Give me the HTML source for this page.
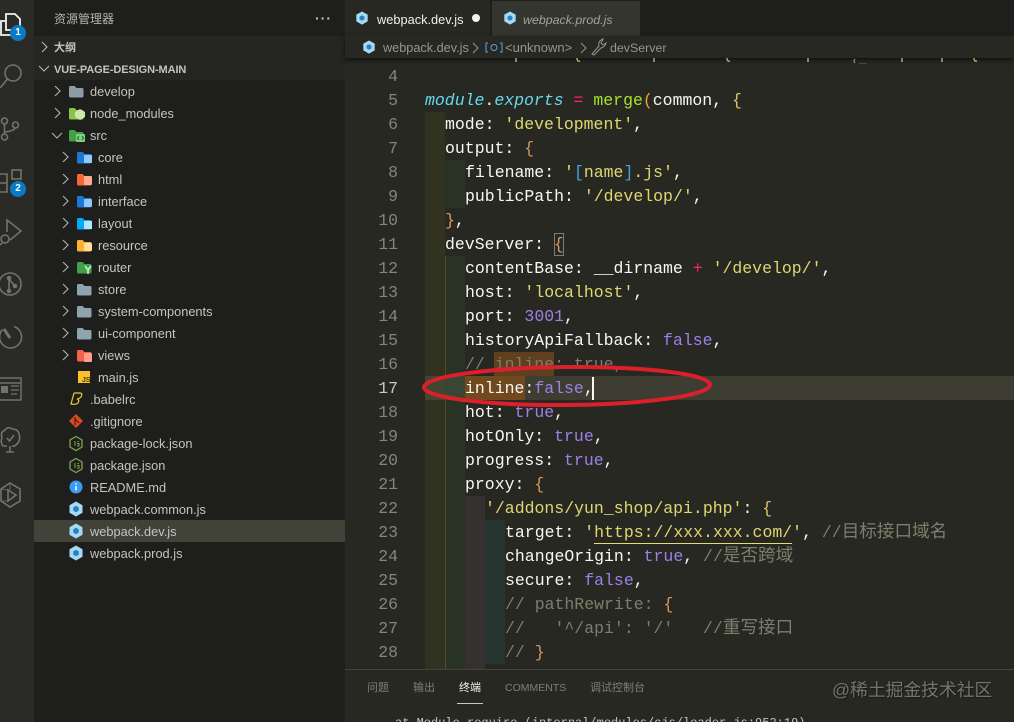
<!DOCTYPE html>
<html><head><meta charset="utf-8"><style>
html,body{margin:0;padding:0;background:#272822}
#r{position:relative;width:1014px;height:722px;overflow:hidden;background:#272822;font-family:"Liberation Sans","Noto Sans CJK SC",sans-serif}
#r div{position:absolute}
.t{left:0;font-size:12.8px;line-height:24px;height:22px;color:#c4c4bf;white-space:nowrap}
.c{font-family:"Liberation Mono","Noto Sans CJK SC",monospace;font-size:16.5px;line-height:26px;height:24px;color:#f8f8f2;white-space:pre}
.n{font-family:"Liberation Mono",monospace;font-size:16.5px;line-height:26px;height:24px;width:60px;left:338px;text-align:right;color:#85857f}
.s{color:#e0d672}.k{color:#9d80e8}.cm{color:#7f7d6c}.o{color:#d79a5e}.y{color:#e0c46a}.b{color:#3ea6d6}
.z{font-size:17.6px;line-height:1}
svg{position:absolute;overflow:visible}
.p{font-size:11px;color:#7f7f79;line-height:16px;white-space:nowrap;top:680px}
</style></head><body><div id="r">
<svg width="0" height="0" style="position:absolute"><defs>
<g id="wp"><path d="M8 0.500 14.500 4.200V11.800L8 15.500 1.500 11.800V4.200Z" fill="#a6daf4"/><path d="M8 4.800 10.800 6.400V9.600L8 11.200 5.200 9.600V6.400Z" fill="#2a80c0"/></g>
<path id="f" d="M0 2.500Q0 1 1.500 1H5.500L7.500 3H13Q14.500 3 14.500 4.500V11Q14.500 12.500 13 12.500H1.500Q0 12.500 0 11Z"/>
<g id="nj"><path d="M7 .5 13 4V11L7 14.500 1 11V4Z" fill="none" stroke="#7da74f" stroke-width="1.300"/><path d="M6 5V10M8.500 5.500H10M8 7.500H10V10H8" fill="none" stroke="#7da74f"/></g>
<path id="ch" d="M0 0 5 5 0 10" fill="none" stroke="#b5b5b0" stroke-width="1.100"/>
<path id="cd" d="M0 0 5 5 10 0" fill="none" stroke="#b5b5b0" stroke-width="1.100"/>
</defs></svg>

<!-- activity bar -->
<div style="left:0;top:0;width:34px;height:722px;background:#2a2b26"></div>
<svg style="left:0;top:0" width="34" height="722" fill="none" stroke="#73736c" stroke-width="1.600">
<path d="M6 21H1V35H13" stroke="#f2f2f0" stroke-width="1.800"/><path d="M6 14H15L20 19V30H6Z" stroke="#f2f2f0" stroke-width="1.800" fill="#2a2b26"/>
<circle cx="13" cy="73" r="8"/><path d="M7.500 79 0 88"/>
<circle cx="4.500" cy="121" r="3"/><circle cx="4.500" cy="137" r="3"/><circle cx="15.500" cy="125" r="3"/><path d="M4.500 124V134M4.500 132Q14 131 15 128"/>
<rect x="12" y="170" width="9" height="9"/><path d="M0 174H7V192H0M0 183H7"/>
<path d="M7 232V220L21 231 10 240"/><circle cx="5" cy="239" r="4"/><path d="M0 245 2 243"/>
<circle cx="10" cy="284" r="11"/><circle cx="9" cy="278" r="1.500" fill="#73736c"/><circle cx="9" cy="291" r="1.500" fill="#73736c"/><circle cx="15" cy="286" r="1.500" fill="#73736c"/><path d="M9 278V291M9 279 15 286"/>
<path d="M14 326.500A11 11 0 1 1 2.500 329.500"/><path d="M4 329 10 338" stroke-width="3"/>
<path d="M0 378H21V400H0M0 383H21" stroke-width="1.400"/><rect x="1" y="386" width="7" height="7" fill="#73736c" stroke="none"/><path d="M11 386H19M11 390H19M11 394H17" stroke-width="1.200"/>
<path d="M7 446H3Q0 442 2 438Q0 432 5 430Q8 426 12 429Q18 429 19 434Q21 440 17 444Q14 447 12 446M10 446V452M6 452H14M7 438 9.500 441 14 435"/>
<path d="M10 483 20 489V501L10 507 1 501V489Z"/><path d="M8 490 16 495 8 501Z"/><path d="M1 489 8 490M1 501 8 501M10 483V490" stroke-width=".8"/>
</svg>
<div style="left:10px;top:25px;width:16px;height:16px;border-radius:8px;background:#0a7ac6;color:#fff;font-size:10px;font-weight:bold;line-height:16px;text-align:center">1</div>
<div style="left:10px;top:181px;width:16px;height:16px;border-radius:8px;background:#0a7ac6;color:#fff;font-size:10px;font-weight:bold;line-height:16px;text-align:center">2</div>

<!-- sidebar -->
<div style="left:34px;top:0;width:311px;height:722px;background:#1e1e1c"></div>
<div style="left:34px;top:36px;width:311px;height:44px;background:#252622"></div>
<div style="left:34px;top:520px;width:311px;height:22px;background:#414339"></div>
<div style="left:54px;top:10px;font-size:12px;line-height:18px;color:#b4b4ae">资源管理器</div>
<div style="left:315px;top:11px;font-size:14px;line-height:14px;color:#c8c8c2;letter-spacing:1px;font-weight:bold">···</div>
<div style="left:54px;top:39px;font-size:11px;line-height:18px;color:#c4c4be;font-weight:bold">大纲</div>
<div style="left:54px;top:61px;font-size:11px;line-height:18px;color:#c4c4be;font-weight:bold;letter-spacing:-.1px">VUE-PAGE-DESIGN-MAIN</div>
<svg style="left:42px;top:42px" width="6" height="11"><use href="#ch"/></svg>
<svg style="left:39px;top:66px" width="11" height="6"><use href="#cd"/></svg>

<div class="t" style="top:80px;left:90px">develop</div>
<div class="t" style="top:102px;left:90px">node_modules</div>
<div class="t" style="top:124px;left:90px">src</div>
<div class="t" style="top:146px;left:98px">core</div>
<div class="t" style="top:168px;left:98px">html</div>
<div class="t" style="top:190px;left:98px">interface</div>
<div class="t" style="top:212px;left:98px">layout</div>
<div class="t" style="top:234px;left:98px">resource</div>
<div class="t" style="top:256px;left:98px">router</div>
<div class="t" style="top:278px;left:98px">store</div>
<div class="t" style="top:300px;left:98px">system-components</div>
<div class="t" style="top:322px;left:98px">ui-component</div>
<div class="t" style="top:344px;left:98px">views</div>
<div class="t" style="top:366px;left:98px">main.js</div>
<div class="t" style="top:388px;left:90px">.babelrc</div>
<div class="t" style="top:410px;left:90px">.gitignore</div>
<div class="t" style="top:432px;left:90px">package-lock.json</div>
<div class="t" style="top:454px;left:90px">package.json</div>
<div class="t" style="top:476px;left:90px">README.md</div>
<div class="t" style="top:498px;left:90px">webpack.common.js</div>
<div class="t" style="top:520px;left:90px">webpack.dev.js</div>
<div class="t" style="top:542px;left:90px">webpack.prod.js</div>

<svg style="left:0;top:0" width="345" height="722">
<use href="#ch" x="55" y="86"/><use href="#ch" x="55" y="108"/><use href="#cd" x="52" y="133"/>
<use href="#ch" x="63" y="152"/><use href="#ch" x="63" y="174"/><use href="#ch" x="63" y="196"/><use href="#ch" x="63" y="218"/><use href="#ch" x="63" y="240"/><use href="#ch" x="63" y="262"/><use href="#ch" x="63" y="284"/><use href="#ch" x="63" y="306"/><use href="#ch" x="63" y="328"/><use href="#ch" x="63" y="350"/>
<use href="#f" x="69" y="85" fill="#8f9ca3"/>
<use href="#f" x="69" y="107" fill="#8bc34a"/><path d="M80 109 85 112V117L80 120 75 117V112Z" fill="#cfe8a9"/>
<use href="#f" x="69" y="129" fill="#43a047"/><rect x="76" y="134" width="9" height="8" rx="1" fill="#7ed07f"/><path d="M79 136 77.500 138 79 140M82 136 83.500 138 82 140" stroke="#1b5e20" fill="none"/>
<use href="#f" x="77" y="151" fill="#1e78d8"/><rect x="84" y="155" width="8" height="8" fill="#90caf9"/>
<use href="#f" x="77" y="173" fill="#f4683a"/><rect x="84" y="176" width="8" height="9" rx="1" fill="#ffab91"/>
<use href="#f" x="77" y="195" fill="#1e78d8"/><rect x="84" y="199" width="8" height="8" rx="1" fill="#90caf9"/>
<use href="#f" x="77" y="217" fill="#03a9f4"/><rect x="84" y="221" width="8" height="8" fill="#b3e5fc"/>
<use href="#f" x="77" y="239" fill="#f9b233"/><rect x="84" y="243" width="8" height="8" rx="1" fill="#ffe29a"/>
<use href="#f" x="77" y="261" fill="#43a047"/><path d="M85 266 88 270 91 266M88 270V274" stroke="#b9f6ca" stroke-width="1.600" fill="none"/>
<use href="#f" x="77" y="283" fill="#90a4ae"/><use href="#f" x="77" y="305" fill="#90a4ae"/><use href="#f" x="77" y="327" fill="#90a4ae"/>
<use href="#f" x="77" y="349" fill="#f4624a"/><rect x="84" y="353" width="8" height="9" rx="1" fill="#ff9e89"/>
<rect x="78" y="371" width="12" height="12" fill="#fbc02d"/><text x="82" y="382" font-size="7" font-weight="bold" fill="#4d3b00" font-family="Liberation Sans">JS</text>
<path d="M74 393H80Q83 393 81 397 79 399 77 399 80 400 78 403 76 405 71 404L74 393" fill="none" stroke="#e7d028" stroke-width="1.200"/>
<path d="M76 414 83 421 76 428 69 421Z" fill="#d8481f"/><path d="M75 417V425M75 419 79 423" stroke="#1e1f1c" fill="none"/>
<use href="#nj" x="69" y="436"/><use href="#nj" x="69" y="458"/>
<circle cx="76" cy="487" r="6.500" fill="#3a9bf0"/><rect x="75.200" y="486" width="1.600" height="4.500" fill="#e8f3ff"/><rect x="75.200" y="483" width="1.600" height="1.600" fill="#e8f3ff"/>
<use href="#wp" x="68" y="501"/><use href="#wp" x="68" y="523"/><use href="#wp" x="68" y="545"/>
</svg>

<!-- tabs -->
<div style="left:345px;top:0;width:669px;height:36px;background:#1e1f1c"></div>
<div style="left:345px;top:0;width:145px;height:36px;background:#272822"></div>
<div style="left:492px;top:1px;width:148px;height:35px;background:#34352f"></div>
<svg style="left:355px;top:11px" width="14" height="14" viewBox="0 0 16 16"><use href="#wp"/></svg>
<svg style="left:503px;top:11px" width="14" height="14" viewBox="0 0 16 16"><use href="#wp"/></svg>
<div style="left:377px;top:11px;font-size:12.8px;line-height:18px;color:#f0f0ea;white-space:nowrap">webpack.dev.js</div>
<div style="left:472px;top:14px;width:8px;height:8px;border-radius:4px;background:#f4f4f0"></div>
<div style="left:523px;top:11px;font-size:12.4px;line-height:18px;color:#a2a29c;font-style:italic;white-space:nowrap">webpack.prod.js</div>

<!-- editor content -->
<div style="left:425px;top:112px;width:20px;height:557px;background:#31321f"></div>
<div style="left:445px;top:160px;width:20px;height:48px;background:#283325"></div>
<div style="left:445px;top:256px;width:20px;height:413px;background:#283325"></div>
<div style="left:465px;top:496px;width:20px;height:173px;background:#36302f"></div>
<div style="left:485px;top:520px;width:20px;height:144px;background:#273530"></div>
<div style="left:445px;top:256px;width:1px;height:413px;background:#54482f"></div>
<div style="left:425px;top:376px;width:589px;height:24px;background:#3e3d32"></div>
<div style="left:425px;top:376px;width:20px;height:24px;background:#42452f"></div>
<div style="left:445px;top:376px;width:20px;height:24px;background:#3a4634"></div>
<div style="left:465px;top:376px;width:60px;height:24px;background:#70491f"></div>
<div style="left:494px;top:352px;width:60px;height:24px;background:#5f3f1e"></div>
<div style="left:554px;top:233px;width:10px;height:23px;border:1px solid #7d7d76;box-sizing:border-box"></div>

<div class="n" style="top:64px">4</div><div class="n" style="top:88px">5</div><div class="n" style="top:112px">6</div><div class="n" style="top:136px">7</div><div class="n" style="top:160px">8</div><div class="n" style="top:184px">9</div><div class="n" style="top:208px">10</div><div class="n" style="top:232px">11</div><div class="n" style="top:256px">12</div><div class="n" style="top:280px">13</div><div class="n" style="top:304px">14</div><div class="n" style="top:328px">15</div><div class="n" style="top:352px">16</div><div class="n" style="top:376px;color:#c8c8c4">17</div><div class="n" style="top:400px">18</div><div class="n" style="top:424px">19</div><div class="n" style="top:448px">20</div><div class="n" style="top:472px">21</div><div class="n" style="top:496px">22</div><div class="n" style="top:520px">23</div><div class="n" style="top:544px">24</div><div class="n" style="top:568px">25</div><div class="n" style="top:592px">26</div><div class="n" style="top:616px">27</div><div class="n" style="top:640px">28</div>

<div class="c" style="left:425px;top:88px"><i style="color:#66d9ef">module</i>.<i style="color:#66d9ef">exports</i> <span style="color:#f92672">=</span> <span style="color:#a6e22e">merge</span><span style="color:#e8a33d">(</span>common, <span class="y">{</span></div>
<div class="c" style="left:445px;top:112px">mode: <span class="s">'development'</span>,</div>
<div class="c" style="left:445px;top:136px">output: <span class="o">{</span></div>
<div class="c" style="left:465px;top:160px">filename: <span class="s">'<span class="b">[</span>name<span class="b">]</span>.js'</span>,</div>
<div class="c" style="left:465px;top:184px">publicPath: <span class="s">'/develop/'</span>,</div>
<div class="c" style="left:445px;top:208px"><span class="o">}</span>,</div>
<div class="c" style="left:445px;top:232px">devServer: <span class="o">{</span></div>
<div class="c" style="left:465px;top:256px">contentBase: __dirname <span style="color:#f92672">+</span> <span class="s">'/develop/'</span>,</div>
<div class="c" style="left:465px;top:280px">host: <span class="s">'localhost'</span>,</div>
<div class="c" style="left:465px;top:304px">port: <span class="k">3001</span>,</div>
<div class="c" style="left:465px;top:328px">historyApiFallback: <span class="k">false</span>,</div>
<div class="c cm" style="left:465px;top:352px">// inline: true,</div>
<div class="c" style="left:465px;top:376px">inline:<span class="k">false</span>,</div>
<div style="left:592px;top:377px;width:1.500px;height:23px;background:#f8f8f0"></div>
<div class="c" style="left:465px;top:400px">hot: <span class="k">true</span>,</div>
<div class="c" style="left:465px;top:424px">hotOnly: <span class="k">true</span>,</div>
<div class="c" style="left:465px;top:448px">progress: <span class="k">true</span>,</div>
<div class="c" style="left:465px;top:472px">proxy: <span class="o">{</span></div>
<div class="c" style="left:485px;top:496px"><span class="s">'/addons/yun_shop/api.php'</span>: <span class="y">{</span></div>
<div class="c" style="left:505px;top:520px">target: <span class="s">'<span style="border-bottom:1px solid #e6db74;padding-bottom:1px">https://xxx.xxx.com/</span>'</span>, <span class="cm">//<span class="z">目标接口域名</span></span></div>
<div class="c" style="left:505px;top:544px">changeOrigin: <span class="k">true</span>, <span class="cm">//<span class="z">是否跨域</span></span></div>
<div class="c" style="left:505px;top:568px">secure: <span class="k">false</span>,</div>
<div class="c cm" style="left:505px;top:592px">// pathRewrite: <span class="o">{</span></div>
<div class="c cm" style="left:505px;top:616px">//   '^/api': '/'   //<span class="z">重写接口</span></div>
<div class="c cm" style="left:505px;top:640px">// <span class="o">}</span></div>

<!-- breadcrumb -->
<div style="left:345px;top:36px;width:669px;height:22px;background:#272822;box-shadow:0 2px 4px #111"></div>
<svg style="left:362px;top:40px" width="14" height="14" viewBox="0 0 16 16"><use href="#wp"/></svg>
<div style="left:383px;top:39px;font-size:12.7px;line-height:18px;color:#96968f;white-space:nowrap">webpack.dev.js</div>
<div style="left:505px;top:39px;font-size:13px;line-height:18px;color:#96968f;white-space:nowrap">&lt;unknown&gt;</div>
<div style="left:610px;top:39px;font-size:12.4px;line-height:18px;color:#96968f;white-space:nowrap">devServer</div>
<svg style="left:345px;top:36px" width="300" height="22" fill="none" stroke="#96968f">
<path d="M128 7 133 12 128 17M236 7 241 12 236 17"/>
<path d="M143 7H141V16H143M155 7H157V16H155" stroke="#5aa6e0"/><circle cx="149" cy="11.500" r="3" stroke="#5aa6e0"/>
<path d="M247 18 254 10Q253 6 256 4L258 3 256 7 258 9 261 7Q260 11 256 12L249 19Z"/>
</svg>
<svg style="left:0;top:0" width="1014" height="70"><path d="M516 58v4M577 58q0 4 3 3M654 58v4M727 58q0 4 3 3M808 58v4M902 58v4M942 58v4M974 58q0 4 3 3" stroke="#b0a96e" stroke-width="1.500" fill="none"/><path d="M855 59q-2 2 0 4" stroke="#d79a5e" fill="none"/><text x="859" y="64" font-size="9" fill="#88886f" font-family="Liberation Sans">...</text></svg>

<!-- panel -->
<div style="left:345px;top:669px;width:669px;height:53px;background:#272822;border-top:1px solid #44443e;box-sizing:border-box"></div>
<div class="p" style="left:367px">问题</div><div class="p" style="left:413px">输出</div>
<div class="p" style="left:459px;color:#f2f2ee">终端</div>
<div style="left:457px;top:703px;width:26px;height:1px;background:#c8c8c4"></div>
<div class="p" style="left:505px;font-size:10.500px">COMMENTS</div>
<div class="p" style="left:590px">调试控制台</div>
<div style="left:395px;top:716px;font-family:'Liberation Mono',monospace;font-size:12px;line-height:14px;color:#c4c4be;white-space:pre">at Module.require (internal/modules/cjs/loader.js:952:19)</div>
<div style="left:832px;top:677px;font-size:17.8px;line-height:26px;color:#74746e;white-space:nowrap;text-shadow:1px 1px 1px #1a1a18">@稀土掘金技术社区</div>

<!-- red ellipse -->
<svg style="left:0;top:0" width="1014" height="722"><ellipse cx="567" cy="386" rx="143" ry="19" fill="none" stroke="#dc1f2b" stroke-width="4" transform="rotate(-.5 567 386)"/></svg>
</div></body></html>
